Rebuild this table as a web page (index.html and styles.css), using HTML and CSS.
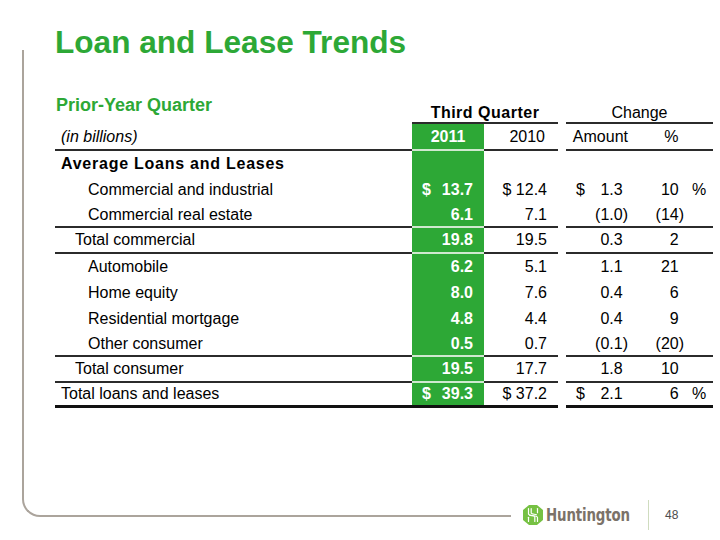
FILE: index.html
```html
<!DOCTYPE html>
<html lang="en">
<head>
<meta charset="utf-8">
<title>Loan and Lease Trends</title>
<link rel="stylesheet" href="styles.css">
</head>
<body>
<div class="slide">
  <h1 class="title">Loan and Lease Trends</h1>

  <div class="table">
    <!-- row 0 -->
    <div class="lab sub">Prior-Year Quarter</div>
    <div class="grp b span2 bold-sp">Third Quarter</div>
    <div class="gap"></div>
    <div class="grp b span3">Change</div>

    <!-- row 1 -->
    <div class="lab ind0 b ital">(in billions)</div>
    <div class="g b ctr">2011</div>
    <div class="b rt hdr10">2010</div>
    <div class="gap"></div>
    <div class="b rt hdramt">Amount</div>
    <div class="b rt hdrpct">%</div>
    <div class="b"></div>

    <!-- row 2 -->
    <div class="lab ind0 bold-sp2">Average Loans and Leases</div>
    <div class="g"></div>
    <div></div>
    <div class="gap"></div>
    <div></div>
    <div></div>
    <div></div>

    <!-- row 3 -->
    <div class="lab ind2">Commercial and industrial</div>
    <div class="g c11 dl"><span>$</span><span>13.7</span></div>
    <div class="c10 dl"><span>$</span><span>12.4</span></div>
    <div class="gap"></div>
    <div class="amt dl pos"><span>$</span><span>1.3</span></div>
    <div class="pn pos">10</div>
    <div class="ps">%</div>

    <!-- row 4 -->
    <div class="lab ind2 b">Commercial real estate</div>
    <div class="g b c11">6.1</div>
    <div class="b c10">7.1</div>
    <div class="gap"></div>
    <div class="b amt">(1.0)</div>
    <div class="b pn">(14)</div>
    <div class="b"></div>

    <!-- row 5 -->
    <div class="lab ind1 b">Total commercial</div>
    <div class="g b c11">19.8</div>
    <div class="b c10">19.5</div>
    <div class="gap"></div>
    <div class="b amt pos">0.3</div>
    <div class="b pn pos">2</div>
    <div class="b"></div>

    <!-- row 6 -->
    <div class="lab ind2">Automobile</div>
    <div class="g c11">6.2</div>
    <div class="c10">5.1</div>
    <div class="gap"></div>
    <div class="amt pos">1.1</div>
    <div class="pn pos">21</div>
    <div></div>

    <!-- row 7 -->
    <div class="lab ind2">Home equity</div>
    <div class="g c11">8.0</div>
    <div class="c10">7.6</div>
    <div class="gap"></div>
    <div class="amt pos">0.4</div>
    <div class="pn pos">6</div>
    <div></div>

    <!-- row 8 -->
    <div class="lab ind2">Residential mortgage</div>
    <div class="g c11">4.8</div>
    <div class="c10">4.4</div>
    <div class="gap"></div>
    <div class="amt pos">0.4</div>
    <div class="pn pos">9</div>
    <div></div>

    <!-- row 9 -->
    <div class="lab ind2 b">Other consumer</div>
    <div class="g b c11">0.5</div>
    <div class="b c10">0.7</div>
    <div class="gap"></div>
    <div class="b amt">(0.1)</div>
    <div class="b pn">(20)</div>
    <div class="b"></div>

    <!-- row 10 -->
    <div class="lab ind1 b">Total consumer</div>
    <div class="g b c11">19.5</div>
    <div class="b c10">17.7</div>
    <div class="gap"></div>
    <div class="b amt pos">1.8</div>
    <div class="b pn pos">10</div>
    <div class="b"></div>

    <!-- row 11 -->
    <div class="lab ind0 bt">Total loans and leases</div>
    <div class="g bt c11 dl"><span>$</span><span>39.3</span></div>
    <div class="bt c10 dl"><span>$</span><span>37.2</span></div>
    <div class="gap"></div>
    <div class="bt amt dl pos"><span>$</span><span>2.1</span></div>
    <div class="bt pn pos">6</div>
    <div class="bt ps">%</div>
  </div>

  <div class="footer">
    <div class="logo">
      <svg class="logo-mark" width="20" height="20" viewBox="0 0 20 20" aria-hidden="true">
        <polygon points="6,0 14,0 20,5 20,15 14,20 6,20 0,15 0,5" fill="#76c143"/>
        <g fill="none" stroke="#fff" stroke-width="1.2" stroke-linecap="round">
          <path d="M5.5 3.5V9c0 1.8 9 1.2 9 3.4v4.1"/>
          <path d="M8.2 3.5v4.6c0 1.2 3.6 1 5.2 1.6"/>
          <path d="M14.5 3.5v4.2"/>
          <path d="M11.8 16.5v-4.6c0-1.2-3.6-1-5.2-1.6"/>
          <path d="M5.5 16.5v-4.2"/>
        </g>
      </svg>
      <span class="logo-word">Huntington</span>
    </div>
    <div class="divider"></div>
    <div class="page-num">48</div>
  </div>
</div>
</body>
</html>
```

FILE: styles.css
```css
body {
  margin: 0;
  background: #ffffff;
  font-family: "Liberation Sans", Arial, sans-serif;
}

.slide {
  position: relative;
  width: 720px;
  height: 540px;
  overflow: hidden;
}

/* rounded grey frame on the left and bottom */
.slide::before {
  content: "";
  position: absolute;
  left: 22px;
  top: 50px;
  width: 489px;
  height: 467px;
  box-sizing: border-box;
  border-left: 2px solid #aba49c;
  border-bottom: 2px solid #aba49c;
  border-bottom-left-radius: 18px;
}

.title {
  margin: 0;
  padding: 26px 0 0 55px;
  font-size: 31.6px;
  line-height: 32px;
  font-weight: bold;
  color: #2da836;
}

.table {
  display: grid;
  margin: 38px 0 0 55px;
  grid-template-columns: 357px 72px 74px 8px 74px 47px 26px;
  grid-template-rows: 28px 27px 26px 26px 25px 26px 26px 26px 26px 25px 26px 25px;
  font-size: 16px;
  color: #000;
}

.table > div {
  box-sizing: border-box;
  display: flex;
  align-items: center;
  line-height: 18px;
  white-space: nowrap;
}

.b { border-bottom: 2px solid #2b2b2b; }
.bt { border-bottom: 3px solid #111; }
.gap { border: none !important; }

.sub {
  align-items: flex-start !important;
  font-size: 18px;
  line-height: 19px !important;
  font-weight: bold;
  color: #2da836;
  padding-left: 1px;
}

.grp {
  align-items: flex-end !important;
  justify-content: center;
}
.span2 { grid-column: span 2; }
.span3 { grid-column: span 3; }
.bold-sp { font-weight: bold; letter-spacing: 0.5px; }
.bold-sp2 { font-weight: bold; letter-spacing: 0.75px; }
.ital { font-style: italic; }

.ind0 { padding-left: 6px; }
.ind1 { padding-left: 20px; }
.ind2 { padding-left: 33px; }

.g {
  background: #2da836;
  color: #fff;
  font-weight: bold;
}
.g.b { border-bottom-color: #cfe9cf; }
.g.bt { border-bottom-color: #111; }

.ctr { justify-content: center; }
.rt { justify-content: flex-end; }

.hdr10 { padding-right: 13px; }
.hdramt { padding-right: 12px; }
.hdrpct { padding-right: 8.5px; }

.c11 { justify-content: flex-end; padding: 0 11px 0 10px; }
.c10 { justify-content: flex-end; padding: 0 11px 0 18.5px; }
.amt { justify-content: flex-end; padding: 0 12px 0 10px; }
.amt.pos { padding-right: 17.3px; }
.pn { justify-content: flex-end; padding-right: 3px; }
.pn.pos { padding-right: 8.3px; }
.ps { padding-left: 5px; }

.dl { justify-content: space-between !important; }

/* footer */
.footer {
  display: flex;
  align-items: center;
  height: 30px;
  margin-top: 92px;
  padding-left: 523px;
}

.logo {
  display: flex;
  align-items: center;
  width: 125px;
}

.logo-mark { flex: none; }

.logo-word {
  display: inline-block;
  margin-left: 3px;
  font-family: "DejaVu Sans Condensed", "DejaVu Sans", sans-serif;
  font-weight: bold;
  font-size: 17.5px;
  line-height: 20px;
  color: #7b7269;
  transform: scaleX(0.85);
  transform-origin: left center;
  letter-spacing: -0.2px;
}

.divider {
  width: 1px;
  height: 30px;
  background: #cfdcbf;
}

.page-num {
  margin-left: 16px;
  font-size: 12px;
  color: #4d4d4d;
}
```
